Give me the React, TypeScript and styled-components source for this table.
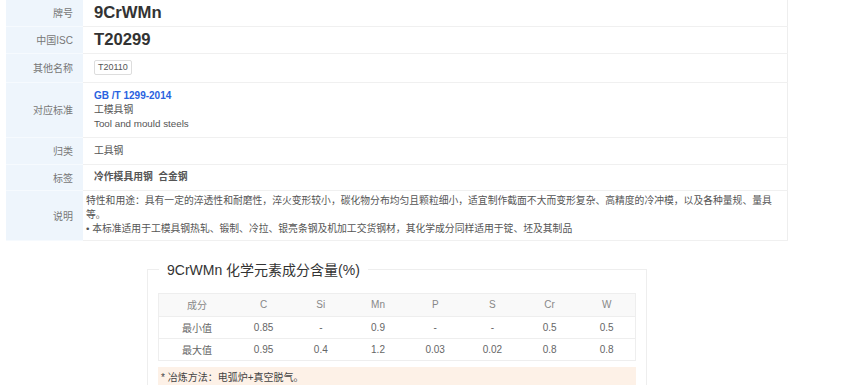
import React from "react";
import styled, { createGlobalStyle } from "styled-components";

const Global = createGlobalStyle`
  html, body { margin: 0; padding: 0; background: #fff; }
  body { font-family: "Liberation Sans", Arial, "Noto Sans CJK SC", sans-serif; color: #333; }
`;

const Page = styled.div`
  padding-left: 6px;
  width: 782px;
`;

const InfoTable = styled.table`
  width: 100%;
  border-collapse: collapse;
  border-right: 1px solid #eee;
  font-size: 10px;
`;

const Row = styled.tr<{ $h: number }>`
  height: ${(p) => p.$h}px;
  border-bottom: 1px solid #f0f0f0;
`;

const Label = styled.th`
  width: 67px;
  background: #eef5fc;
  color: #777;
  font-weight: normal;
  text-align: right;
  padding: 0 10px 0 0;
  font-size: 10px;
  white-space: nowrap;
  border-bottom: 1px solid #f6fafe;
`;

const Value = styled.td<{ $size?: number; $bold?: boolean; $tight?: boolean }>`
  padding: ${(p) => (p.$tight ? "0 11px 0 3px" : "0 11px")};
  color: ${(p) => (p.$size ? "#333" : "#555")};
  font-size: ${(p) => p.$size ?? 9.8}px;
  font-weight: ${(p) => (p.$bold ? "bold" : "normal")};
  line-height: 14px;
`;

const Tag = styled.span`
  display: inline-block;
  border: 1px solid #ddd;
  border-radius: 2px;
  padding: 1px 3px;
  font-size: 9px;
  line-height: 11px;
  color: #555;
`;

const Link = styled.div`
  color: #2962e0;
  font-weight: bold;
  font-size: 10px;
`;

const Line = styled.div`
  margin: 0;
`;

const Section = styled.fieldset`
  margin: 20px 0 0 141px;
  width: 478px;
  border: 1px solid #eee;
  border-bottom: none;
  padding: 5px 10px 0 10px;
`;

const Legend = styled.legend`
  font-size: 14px;
  line-height: 18px;
  color: #333;
  padding: 0 8px;
  margin-left: 1px;
`;

const ChemTable = styled.table`
  width: 478px;
  table-layout: fixed;
  border-collapse: collapse;
  border: 1px solid #eee;
  font-size: 10px;
  color: #666;
  margin-top: 9px;
`;

const HeadCell = styled.th<{ $w?: number }>`
  height: 22px;
  background: #f9f9f9;
  color: #888;
  font-weight: normal;
  text-align: center;
  border-bottom: 1px solid #eee;
  padding: 0;
  width: ${(p) => (p.$w ? `${p.$w}px` : "auto")};
`;

const Cell = styled.td`
  height: 21px;
  text-align: center;
  border-bottom: 1px solid #eee;
  padding: 0;
`;

const Note = styled.div`
  margin-top: 6px;
  background: #fdf1e7;
  padding: 4px 3px 8px;
  font-size: 10px;
  line-height: 14px;
  color: #444;
`;

const cols = ["C", "Si", "Mn", "P", "S", "Cr", "W"];
const rows = [
  { name: "最小值", vals: ["0.85", "-", "0.9", "-", "-", "0.5", "0.5"] },
  { name: "最大值", vals: ["0.95", "0.4", "1.2", "0.03", "0.02", "0.8", "0.8"] },
];

export default function App() {
  return (
    <Page>
      <Global />
      <InfoTable>
        <tbody>
          <Row $h={26}>
            <Label>牌号</Label>
            <Value $size={16.7} $bold>9CrWMn</Value>
          </Row>
          <Row $h={27}>
            <Label>中国ISC</Label>
            <Value $size={16.7} $bold>T20299</Value>
          </Row>
          <Row $h={29}>
            <Label>其他名称</Label>
            <Value><Tag>T20110</Tag></Value>
          </Row>
          <Row $h={55}>
            <Label>对应标准</Label>
            <Value>
              <Link>GB /T 1299-2014</Link>
              <Line>工模具钢</Line>
              <Line>Tool and mould steels</Line>
            </Value>
          </Row>
          <Row $h={27}>
            <Label>归类</Label>
            <Value>工具钢</Value>
          </Row>
          <Row $h={26}>
            <Label>标签</Label>
            <Value $bold>冷作模具用钢&nbsp;&nbsp;合金钢</Value>
          </Row>
          <Row $h={50}>
            <Label>说明</Label>
            <Value $tight>
              <Line>特性和用途：具有一定的淬透性和耐磨性，淬火变形较小，碳化物分布均匀且颗粒细小，适宜制作截面不大而变形复杂、高精度的冷冲模，以及各种量规、量具等。</Line>
              <Line>• 本标准适用于工模具钢热轧、锻制、冷拉、银亮条钢及机加工交货钢材，其化学成分同样适用于锭、坯及其制品</Line>
            </Value>
          </Row>
        </tbody>
      </InfoTable>
      <Section>
        <Legend>9CrWMn 化学元素成分含量(%)</Legend>
        <ChemTable>
          <thead>
            <tr>
              <HeadCell $w={76}>成分</HeadCell>
              {cols.map((c) => (
                <HeadCell key={c}>{c}</HeadCell>
              ))}
            </tr>
          </thead>
          <tbody>
            {rows.map((r) => (
              <tr key={r.name}>
                <Cell>{r.name}</Cell>
                {r.vals.map((v, i) => (
                  <Cell key={i}>{v}</Cell>
                ))}
              </tr>
            ))}
          </tbody>
        </ChemTable>
        <Note>* 冶炼方法：电弧炉+真空脱气。</Note>
      </Section>
    </Page>
  );
}
